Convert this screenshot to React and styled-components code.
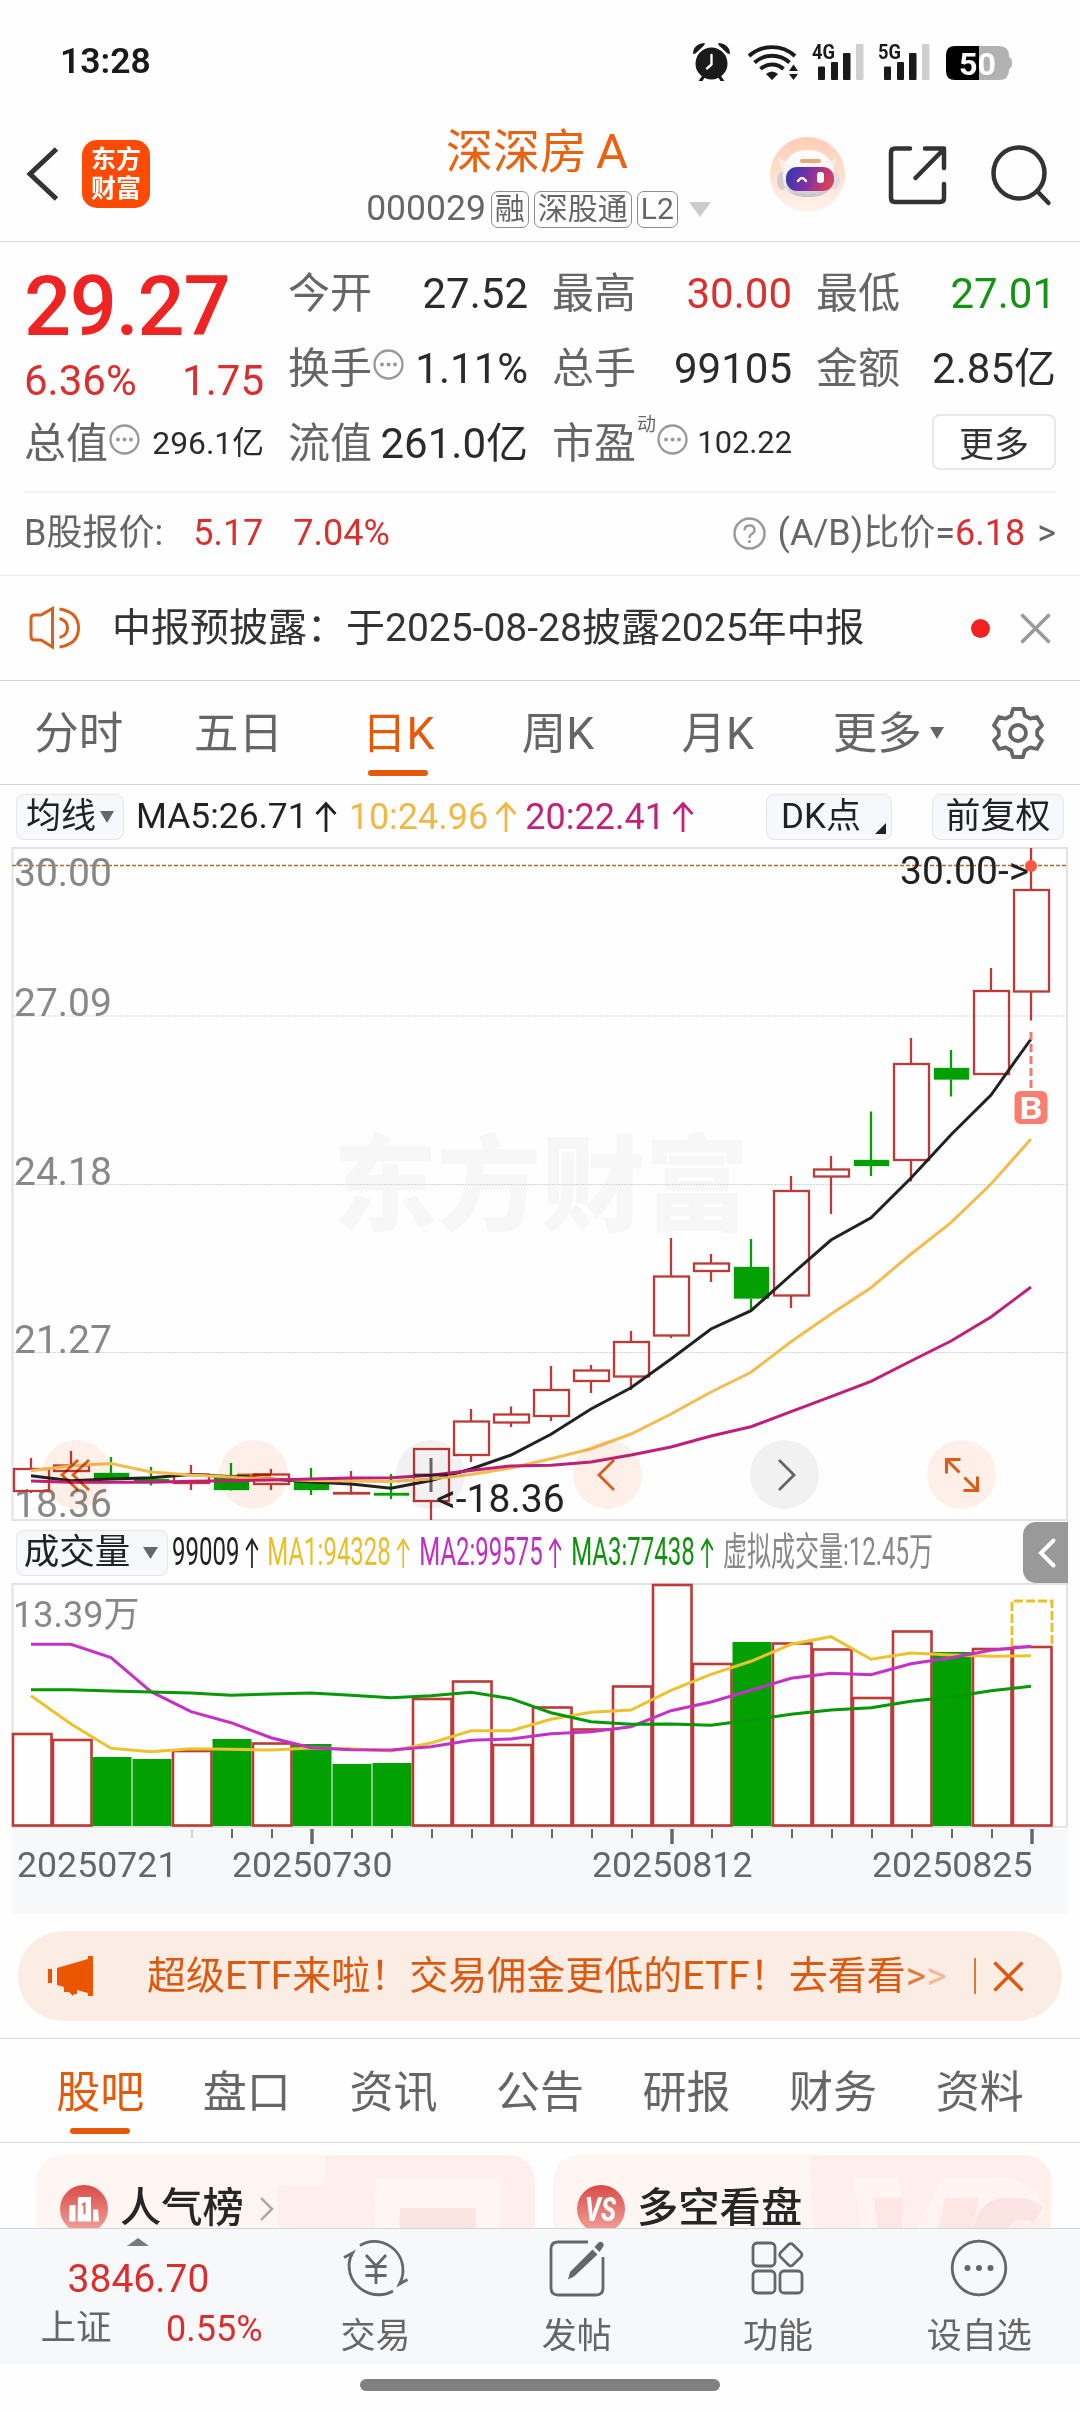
import React from 'react';
import styled, { createGlobalStyle, css } from 'styled-components';

const ORANGE = '#e5590b';
const RED = '#d92f2f';
const CANDLE_RED = '#bd3a37';
const GREEN = '#02a002';
const GRAY = '#666666';

const GlobalStyle = createGlobalStyle`
  * {
    box-sizing: border-box;
  }
  body {
    margin: 0;
    background: #ffffff;
    font-family: Roboto, 'Noto Sans CJK SC', sans-serif;
    line-height: 1;
    color: #222222;
  }
  svg {
    display: block;
    flex-shrink: 0;
    overflow: visible;
  }
`;

const Page = styled.div`
  width: 1080px;
  height: 2412px;
  display: flex;
  flex-direction: column;
  overflow: hidden;
  background: #fefefe;
`;

/* status bar */
const StatusBarWrap = styled.div`
  height: 104px;
  padding: 20px 68px 0 60px;
  display: flex;
  align-items: center;
  justify-content: space-between;
`;
const Clock = styled.span`
  font-size: 35.5px;
  font-weight: 600;
  color: #1a1a1a;
`;

/* header */
const HeaderWrap = styled.header`
  height: 138px;
  display: grid;
  grid-template-columns: 350px 376px 1fr;
  border-bottom: 1px solid #d4d4d4;
`;
const HeaderLeft = styled.div`
  display: flex;
  align-items: center;
  padding: 3px 0 0 25px;
  gap: 22px;
`;
const Logo = styled.div`
  width: 68px;
  height: 68px;
  border-radius: 15px;
  background: #fe4a02;
  color: #ffffff;
  font-size: 25px;
  font-weight: 700;
  line-height: 29px;
  text-align: center;
  padding-top: 5px;
`;
const HeaderCenter = styled.div`
  display: flex;
  flex-direction: column;
  align-items: center;
  padding-top: 20px;
  gap: 11px;
`;
const Title = styled.h1`
  margin: 0 2px 0 0;
  font-size: 47px;
  font-weight: 400;
  line-height: 56px;
  color: #e8620f;
  span {
    margin-left: 9px;
    font-size: 49px;
  }
`;
const CodeRow = styled.div`
  display: flex;
  align-items: center;
  height: 36px;
  gap: 5px;
  margin-left: 1px;
  font-size: 35.5px;
  color: ${GRAY};
`;
const Tag = styled.span`
  height: 37px;
  padding: 0 3px;
  border: 1.5px solid #8c8c8c;
  border-radius: 7px;
  font-size: 30px;
  line-height: 34px;
`;
const HeaderRight = styled.div`
  display: flex;
  align-items: center;
  justify-content: flex-end;
  padding: 4px 29px 0 0;
  gap: 43px;
`;

/* quote */
const QuoteWrap = styled.section`
  height: 249px;
  padding: 14px 24px 0;
  display: grid;
  grid-template-columns: repeat(4, 240px);
  column-gap: 24px;
`;
const QuoteCol = styled.div`
  display: flex;
  flex-direction: column;
`;
const Price = styled.div`
  height: 100px;
  line-height: 102px;
  font-size: 83px;
  font-weight: 500;
  letter-spacing: -1.300px;
  color: #ee2424;
`;
const Change = styled.div`
  height: 50px;
  display: flex;
  align-items: center;
  justify-content: space-between;
  font-size: 42px;
  color: ${RED};
`;
const Cell = styled.div`
  height: 75px;
  display: flex;
  align-items: center;
  white-space: nowrap;
`;
const CellLabel = styled.span`
  font-size: 42px;
  color: ${GRAY};
`;
const CellSup = styled.sup`
  align-self: flex-start;
  margin: 9px 0 0 1px;
  font-size: 19px;
  color: ${GRAY};
`;
const CellValue = styled.span`
  margin-left: auto;
  font-size: ${(p) => p.$size || 42}px;
  color: ${(p) => p.$color || '#2b2b2b'};
`;
const InfoIcon = styled.svg`
  margin: -8px 0 0 1px;
`;
const MoreButton = styled.button`
  width: 124px;
  height: 56px;
  margin: -4px 0 0 auto;
  padding: 0 0 2px;
  border: 2px solid #e8e8e8;
  border-radius: 8px;
  background: #ffffff;
  font: 35px Roboto, 'Noto Sans CJK SC', sans-serif;
  color: #333333;
`;
const Divider = styled.div`
  height: 2px;
  margin: 0 24px;
  background: #f3f3f3;
`;
const BShareRow = styled.div`
  height: 83px;
  padding: 0 24px 2px;
  display: flex;
  align-items: center;
  border-bottom: 1px solid #ececec;
  font-size: 36px;
  color: ${GRAY};
  b {
    font-weight: 400;
    color: ${RED};
    margin-left: 30px;
  }
`;
const Ratio = styled.div`
  margin-left: auto;
  display: flex;
  align-items: center;
  gap: 12px;
  b {
    margin: 0;
  }
`;

/* notice */
const NoticeRow = styled.div`
  height: 105px;
  padding: 0 29px;
  display: flex;
  align-items: center;
  border-bottom: 1px solid #d4d4d4;
`;
const NoticeText = styled.span`
  margin-left: 31px;
  font-size: 39px;
  color: #333333;
`;
const RedDot = styled.i`
  width: 19px;
  height: 19px;
  margin: 0 30px 0 auto;
  border-radius: 50%;
  background: #f02222;
`;

/* tabs */
const activeMark = css`
  &::after {
    content: '';
    position: absolute;
    left: 50%;
    bottom: 8px;
    width: 60px;
    height: 6px;
    margin-left: -30px;
    border-radius: 3px;
    background: ${ORANGE};
  }
`;
const Tab = styled.div`
  position: relative;
  flex: 0 0 ${(p) => p.$width}px;
  height: 100%;
  display: flex;
  align-items: center;
  justify-content: center;
  padding-top: 4px;
  color: ${(p) => (p.$active ? ORANGE : GRAY)};
  ${(p) => p.$active && activeMark}
`;
const PeriodTabs = styled.nav`
  height: 104px;
  margin-left: -1px;
  display: flex;
  align-items: center;
  border-bottom: 1px solid #d4d4d4;
  font-size: 44.5px;
`;
const TabCaret = styled.svg`
  margin: -4px -22px 0 8px;
`;
const GearWrap = styled.div`
  margin-left: 35px;
`;

/* indicator rows */
const MaRow = styled.div`
  height: 62px;
  padding: 1px 16px 0;
  display: flex;
  align-items: center;
`;
const Chip = styled.div`
  position: relative;
  width: ${(p) => p.$width}px;
  height: 46px;
  display: flex;
  align-items: center;
  justify-content: center;
  flex-shrink: 0;
  gap: ${(p) => p.$gap || 0}px;
  padding-right: ${(p) => p.$right || 0}px;
  border: 1.5px solid #e2e5eb;
  border-radius: 8px;
  background: #f6f8fb;
  font-size: ${(p) => p.$size || 35}px;
  color: #222222;
`;
const CornerMark = styled.i`
  position: absolute;
  right: 5px;
  bottom: 5px;
  border-left: 11px solid transparent;
  border-bottom: 11px solid #222222;
`;
const MaValue = styled.span`
  display: flex;
  align-items: center;
  margin-left: ${(p) => p.$left}px;
  gap: 7px;
  font-size: ${(p) => p.$size || 36}px;
  color: ${(p) => p.$color};
`;
const ChipGroup = styled.div`
  margin-left: auto;
  display: flex;
  gap: 40px;
`;
const VolRow = styled.div`
  height: 63px;
  padding: 0 12px 0 16px;
  display: flex;
  align-items: center;
`;
const VolValues = styled.div`
  width: 850px;
  margin-left: 4px;
  display: grid;
  grid-template-columns: 155px 247px 247px 247px 340px;
  transform: scaleX(0.615);
  transform-origin: left center;
  font-size: 39px;
  white-space: nowrap;
`;
const VolValue = styled.span`
  display: flex;
  align-items: center;
  gap: 9px;
  color: ${(p) => p.$color};
`;
const Collapse = styled.button`
  width: 45px;
  height: 61px;
  margin-left: auto;
  padding: 0 0 0 14px;
  border: 0;
  border-radius: 13px 0 0 13px;
  background: #999999;
`;

/* charts */
const ChartWrap = styled.div`
  position: relative;
  height: ${(p) => p.$height}px;
`;
const ChartTools = styled.div`
  position: absolute;
  left: 42px;
  bottom: 12px;
  display: flex;
  gap: 108px;
  mix-blend-mode: multiply;
`;
const ToolButton = styled.span`
  width: 69px;
  height: 69px;
  display: flex;
  align-items: center;
  justify-content: center;
  border-radius: 50%;
  background: ${(p) => (p.$gray ? '#f2f2f2' : '#fff1ea')};
  color: ${(p) => (p.$gray ? GRAY : '#dd5c17')};
`;
const AxisWrap = styled.div`
  height: 84px;
  margin: 0 12px;
  background: #f7f8fa;
`;

/* banner */
const Banner = styled.div`
  height: 90px;
  margin: 18px 18px 17px;
  padding: 0 38px 0 29px;
  display: flex;
  align-items: center;
  border-radius: 45px;
  background: #fcede4;
`;
const BannerText = styled.span`
  margin-left: 54px;
  font-size: 39px;
  white-space: nowrap;
  color: #dc5a10;
  i {
    font-style: normal;
    color: #e27a42;
  }
  i + i {
    color: #f2b799;
  }
`;
const BannerLine = styled.i`
  width: 2px;
  height: 36px;
  margin: 0 17px 0 auto;
  background: #e0773f;
`;

const InfoTabs = styled.nav`
  height: 105px;
  padding: 0 27px;
  display: flex;
  align-items: center;
  border-top: 1px solid #d4d4d4;
  border-bottom: 1px solid #d4d4d4;
  font-size: 44px;
`;

/* cards */
const CardsRow = styled.div`
  height: 85px;
  padding: 12px 29px 0 36px;
  display: grid;
  grid-template-columns: 499px 498px;
  column-gap: 18px;
  overflow: hidden;
`;
const Card = styled.div`
  position: relative;
  height: 130px;
  border-radius: 26px;
  overflow: hidden;
  background: #fff6f3;
`;
const CardArt = styled.svg`
  position: absolute;
  right: 0;
  top: 0;
`;
const CardHead = styled.div`
  position: relative;
  height: 108px;
  padding-left: 24px;
  display: flex;
  align-items: center;
  font-size: 41.3px;
  font-weight: 500;
  color: #262626;
  span {
    margin: 0 15px 0 12px;
  }
`;

/* bottom nav */
const BottomNav = styled.nav`
  height: 136px;
  display: grid;
  grid-template-columns: 275px repeat(4, 201.2px);
  border-top: 1px solid #d2d5d9;
  background: #f7f8fa;
`;
const IndexBox = styled.div`
  display: flex;
  flex-direction: column;
  align-items: center;
  padding-top: 9px;
`;
const IndexValue = styled.div`
  margin: 14px 0 0 2px;
  font-size: 39px;
  color: ${RED};
`;
const IndexRow = styled.div`
  width: 222px;
  margin: 12px 0 0 28px;
  display: flex;
  justify-content: space-between;
  font-size: 36px;
  color: ${RED};
  span {
    font-size: 35.5px;
    color: ${GRAY};
  }
`;
const NavItem = styled.div`
  display: flex;
  flex-direction: column;
  align-items: center;
  padding-top: 9px;
  gap: 21px;
  font-size: 35px;
  color: ${GRAY};
`;
const HomeArea = styled.div`
  height: 48px;
  display: flex;
  justify-content: center;
  padding-top: 15px;
`;
const HomeBar = styled.div`
  width: 360px;
  height: 12px;
  border-radius: 6px;
  background: #808080;
`;

const firstX = 31;
const step = 40;

// [high, top, bottom, low, falling]
const candles = [
  [1458, 1469, 1491, 1493],
  [1451, 1465.5, 1471, 1471],
  [1457, 1473, 1479, 1480, 1],
  [1467, 1479, 1481, 1485.5, 1],
  [1465, 1474.5, 1483, 1490],
  [1463, 1475, 1490, 1490.5, 1],
  [1469, 1474.5, 1484, 1490],
  [1468, 1479, 1490, 1495, 1],
  [1471, 1493, 1493, 1494.5],
  [1474, 1493, 1495, 1499, 1],
  [1449, 1449, 1501, 1520],
  [1409, 1421.5, 1455, 1462],
  [1406.5, 1414.5, 1422.5, 1427],
  [1366, 1390, 1416, 1421],
  [1365, 1370.5, 1381, 1393],
  [1331, 1342, 1376.5, 1390],
  [1238, 1276.5, 1335.5, 1338],
  [1254, 1263.5, 1271, 1282],
  [1239, 1267, 1298.5, 1309, 1],
  [1176, 1191, 1295.5, 1308],
  [1156, 1169.5, 1176.5, 1214],
  [1111.5, 1160, 1166, 1176, 1],
  [1038, 1064, 1160, 1181.5],
  [1050, 1068, 1079.5, 1096.5, 1],
  [968, 991, 1074, 1074],
  [848, 890, 991.5, 1020.5],
];

const ma5 = [
  1475.7, 1480.7, 1479, 1477.7, 1474.5, 1476.7, 1479, 1482, 1484, 1488.3, 1480.5, 1469, 1455,
  1434.3, 1409, 1387.7, 1359, 1329, 1310.7, 1275, 1240, 1217.7, 1178, 1134.7, 1095, 1039,
];
const ma10 = [
  1470.7, 1465.7, 1463.5, 1472, 1475, 1477, 1479, 1480.5, 1481, 1481.5, 1479, 1474.6, 1468,
  1458.7, 1448.7, 1434, 1414, 1392, 1372.3, 1341.7, 1314, 1287.7, 1254, 1222.7, 1184, 1139,
];
const ma20 = [
  1481, 1482.3, 1482.3, 1482.3, 1481.3, 1480.7, 1480, 1479, 1478, 1477.7, 1475.3, 1470.6, 1466,
  1465.3, 1462, 1455, 1447, 1436, 1426.7, 1411.7, 1396.7, 1381.3, 1361, 1341, 1317, 1287,
];

// [top, falling]
const volumes = [
  [1734], [1740], [1758, 1], [1760, 1], [1751], [1740, 1], [1743.5], [1745, 1], [1765, 1],
  [1764, 1], [1699], [1681.5], [1745], [1707.5], [1729.5], [1686.5], [1585], [1664], [1643, 1],
  [1643.5], [1649.5], [1698], [1631.5], [1653, 1], [1649], [1647],
];
const volMa1 = [
  1695.7, 1724, 1748.3, 1751.7, 1748.7, 1749.3, 1750, 1748, 1748.7, 1751, 1743, 1730.7, 1730.7,
  1719.3, 1712.3, 1710, 1690.3, 1674.3, 1661.3, 1644.3, 1636.7, 1659.3, 1653, 1655, 1656.3, 1655.7,
];
const volMa2 = [
  1644.3, 1644.3, 1657.7, 1691.7, 1711.7, 1722.7, 1737.7, 1747.7, 1749.7, 1750, 1746.7, 1740.3,
  1739, 1733.7, 1731.7, 1726.7, 1710.7, 1702, 1690.3, 1678.3, 1673.3, 1674.7, 1663.7, 1657.7,
  1650.3, 1646.3,
];
const volMa3 = [
  1689.7, 1689.7, 1691, 1692, 1693, 1695.3, 1694, 1693, 1695.3, 1697.7, 1695.7, 1692.3, 1698.7,
  1712.7, 1721.7, 1724.3, 1724, 1725.3, 1720, 1714.3, 1710, 1707.7, 1701.3, 1697, 1690.7, 1686.3,
];

const toPoints = (list) => list.map((y, i) => `${firstX + i * step},${y}`).join(' ');

function Line({ data, color }) {
  return <polyline points={toPoints(data)} fill="none" stroke={color} strokeWidth="3" />;
}

function Caret({ color = GRAY, w = 14, h = 12 }) {
  return (
    <svg width={w} height={h} viewBox="0 0 14 12" preserveAspectRatio="none">
      <path d="M0 0h14l-7 12z" fill={color} />
    </svg>
  );
}

function UpArrow() {
  return (
    <svg width="22" height="30" viewBox="0 0 22 30">
      <path d="M11 30V2M1.500 12L11 1.500 20.500 12" fill="none" stroke="currentColor" strokeWidth="2.800" />
    </svg>
  );
}

function MoreInfo() {
  return (
    <InfoIcon width="31" height="31" viewBox="0 0 31 31">
      <circle cx="15.500" cy="15.500" r="14" fill="none" stroke="#999" strokeWidth="2.300" />
      <circle cx="9" cy="15.500" r="2" fill="#999" />
      <circle cx="15.500" cy="15.500" r="2" fill="#999" />
      <circle cx="22" cy="15.500" r="2" fill="#999" />
    </InfoIcon>
  );
}

function Cross({ color, size = 31 }) {
  return (
    <svg width={size} height={size} viewBox="0 0 31 31">
      <path d="M1.500 1.500l28 28M29.500 1.500l-28 28" stroke={color} strokeWidth="3.400" />
    </svg>
  );
}

function StatusBar() {
  return (
    <StatusBarWrap>
      <Clock>13:28</Clock>
      <svg width="320" height="60" viewBox="692 32 320 60">
        <g fill="#1a1a1a">
          <circle cx="711.5" cy="63.5" r="16" />
          <path d="M693 54c0-7 5-11 12-11l-1 2.500-8.500 8zM730 54c0-7-5-11-12-11l1 2.500 8.500 8z" />
          <path d="M702 76l-3.500 5h4l2.500-4zM721 76l3.500 5h-4l-2.500-4z" />
          <path d="M711.500 55v9.500l-4.500 4" fill="none" stroke="#fff" strokeWidth="2.400" strokeLinecap="round" />
        </g>
        <g fill="none" stroke="#1a1a1a" strokeWidth="3.800">
          <path d="M749 56a34 34 0 0 1 46 0" />
          <path d="M754.500 62.500a26 26 0 0 1 35 0" />
          <path d="M760.500 69a17 17 0 0 1 23 0" />
        </g>
        <path d="M766 74q6-5 12 0l-6 6zM789 71l4.500-6.500 4.500 6.500zM789 74l4.500 6 4.500-6z" fill="#1a1a1a" />
        {[812, 878].map((x, i) => (
          <g key={x} fill="#1a1a1a">
            <text x={x} y="59" fontSize="21" fontWeight="700" textLength="23" lengthAdjust="spacingAndGlyphs">
              {i ? '5G' : '4G'}
            </text>
            <rect x={x + 6} y="66.500" width="7" height="13.500" rx="1" />
            <rect x={x + 19} y="62" width="7" height="18" rx="1" />
            <rect x={x + 31} y="53" width="7.500" height="27" rx="1" />
            <rect x={x + 44} y="44" width="7.500" height="36" rx="1" fill="#cfcfcf" />
          </g>
        ))}
        <path d="M955 46h44q10 0 10 10v1q3 1 3 6t-3 6v1q0 10-10 10h-44z" fill="#b2b2b2" />
        <path d="M979 46v34h-24q-9 0-9-9V55q0-9 9-9z" fill="#000" />
        <text x="977.500" y="75" fontSize="31" fontWeight="700" fill="#fff" textAnchor="middle" textLength="37" lengthAdjust="spacingAndGlyphs">
          50
        </text>
      </svg>
    </StatusBarWrap>
  );
}

function Robot() {
  return (
    <svg width="75" height="75" viewBox="0 0 75 75">
      <defs>
        <linearGradient id="robotBg" x1="0" y1="0" x2="0" y2="1">
          <stop offset="0" stopColor="#ffcdb4" />
          <stop offset="1" stopColor="#fff3ec" />
        </linearGradient>
        <linearGradient id="robotFace" x1="0" y1="0" x2="1" y2="0.200">
          <stop offset="0" stopColor="#2b3cae" />
          <stop offset="0.500" stopColor="#7a2fa6" />
          <stop offset="1" stopColor="#d8405c" />
        </linearGradient>
        <linearGradient id="robotHead" x1="0" y1="0" x2="0" y2="1">
          <stop offset="0" stopColor="#ffffff" />
          <stop offset="0.700" stopColor="#efecee" />
          <stop offset="1" stopColor="#c3bfc5" />
        </linearGradient>
      </defs>
      <circle cx="37.500" cy="37.500" r="37.500" fill="url(#robotBg)" />
      <path d="M8 17q1 6 7 7l3 6-4 4q-6-7-6-17zM66 17q0 6-6 7l-3 6 4 4q6-7 5-17z" fill="#f6ecea" />
      <ellipse cx="12" cy="44" rx="5" ry="9" fill="#d3cdd2" />
      <ellipse cx="65" cy="44" rx="5" ry="9" fill="#e3dcdf" />
      <path d="M38 13c17 0 26 11 26 26 0 14-8 21-26 21s-25-7-25-21c0-15 8-26 25-26z" fill="url(#robotHead)" />
      <rect x="30" y="22" width="21" height="4" rx="2" fill="#e9a878" />
      <rect x="16" y="30" width="48" height="24" rx="11" fill="url(#robotFace)" />
      <path d="M28 44q4-6 8 0" fill="none" stroke="#fff" strokeWidth="2.500" strokeLinecap="round" />
      <rect x="47" y="35" width="7" height="11" rx="3" fill="#fff" />
    </svg>
  );
}

function Header() {
  return (
    <HeaderWrap>
      <HeaderLeft>
        <svg width="35" height="56" viewBox="0 0 35 56">
          <path d="M31.500 3L5 28l26.500 25" fill="none" stroke="#333" strokeWidth="5" />
        </svg>
        <Logo>
          东方
          <br />
          财富
        </Logo>
      </HeaderLeft>
      <HeaderCenter>
        <Title>
          深深房<span>A</span>
        </Title>
        <CodeRow>
          000029
          <Tag>融</Tag>
          <Tag>深股通</Tag>
          <Tag>L2</Tag>
          <svg width="28" height="15" viewBox="-6 0 28 15">
            <path d="M0 0h22L11 15z" fill="#cccccc" />
          </svg>
        </CodeRow>
      </HeaderCenter>
      <HeaderRight>
        <Robot />
        <svg width="58" height="58" viewBox="0 0 58 58">
          <g fill="none" stroke="#333" strokeWidth="4.500" strokeLinecap="round" strokeLinejoin="round">
            <path d="M22 2.500H7q-4 0-4 4V52q0 4 4 4h45q4 0 4-4V38" />
            <path d="M37 2.500h19V22M56 3L27.500 32" />
          </g>
        </svg>
        <svg width="62" height="60" viewBox="0 0 62 60">
          <circle cx="30" cy="28" r="25.500" fill="none" stroke="#333" strokeWidth="4.500" />
          <path d="M48 46l11.500 12" stroke="#333" strokeWidth="4.500" strokeLinecap="round" />
        </svg>
      </HeaderRight>
    </HeaderWrap>
  );
}

function Quote() {
  return (
    <>
      <QuoteWrap>
        <QuoteCol>
          <Price>29.27</Price>
          <Change>
            <span>6.36%</span>
            <span>1.75</span>
          </Change>
          <Cell>
            <CellLabel>总值</CellLabel>
            <MoreInfo />
            <CellValue $size={31.8}>296.1亿</CellValue>
          </Cell>
        </QuoteCol>
        <QuoteCol>
          <Cell>
            <CellLabel>今开</CellLabel>
            <CellValue>27.52</CellValue>
          </Cell>
          <Cell>
            <CellLabel>换手</CellLabel>
            <MoreInfo />
            <CellValue>1.11%</CellValue>
          </Cell>
          <Cell>
            <CellLabel>流值</CellLabel>
            <CellValue>261.0亿</CellValue>
          </Cell>
        </QuoteCol>
        <QuoteCol>
          <Cell>
            <CellLabel>最高</CellLabel>
            <CellValue $color={RED}>30.00</CellValue>
          </Cell>
          <Cell>
            <CellLabel>总手</CellLabel>
            <CellValue>99105</CellValue>
          </Cell>
          <Cell>
            <CellLabel>市盈</CellLabel>
            <CellSup>动</CellSup>
            <MoreInfo />
            <CellValue $size={30.8}>102.22</CellValue>
          </Cell>
        </QuoteCol>
        <QuoteCol>
          <Cell>
            <CellLabel>最低</CellLabel>
            <CellValue $color="#149414">27.01</CellValue>
          </Cell>
          <Cell>
            <CellLabel>金额</CellLabel>
            <CellValue>2.85亿</CellValue>
          </Cell>
          <Cell>
            <MoreButton>更多</MoreButton>
          </Cell>
        </QuoteCol>
      </QuoteWrap>
      <Divider />
      <BShareRow>
        B股报价:<b>5.17</b>
        <b>7.04%</b>
        <Ratio>
          <svg width="33" height="33" viewBox="0 0 33 33">
            <circle cx="16.500" cy="16.500" r="15" fill="none" stroke="#999" strokeWidth="2.500" />
            <path d="M11.500 13.500q0-5 5-5t5 4.500q0 3-3.500 4.500-1.500.800-1.500 3.500" fill="none" stroke="#999" strokeWidth="2.300" />
            <circle cx="16.500" cy="24.500" r="1.600" fill="#999" />
          </svg>
          <span>
            (A/B)比价=<b>6.18</b>
          </span>
          <span>&gt;</span>
        </Ratio>
      </BShareRow>
    </>
  );
}

function Notice() {
  return (
    <NoticeRow>
      <svg width="52" height="44" viewBox="0 0 52 44">
        <g fill="none" stroke="#d9611c" strokeWidth="3">
          <path d="M23.500 2.500L12 9H5.500Q2 9 2 12.500v18Q2 34 5.500 34H12l11.500 7z" />
          <path d="M30.500 12.500q8 2 8 9.500t-8 9.500M30.500 3q19 3 19 19t-19 19" />
        </g>
      </svg>
      <NoticeText>中报预披露：于2025-08-28披露2025年中报</NoticeText>
      <RedDot />
      <Cross color="#999" />
    </NoticeRow>
  );
}

function Periods() {
  return (
    <PeriodTabs>
      {['分时', '五日', '日K', '周K', '月K', '更多'].map((name) => (
        <Tab key={name} $width={159.7} $active={name === '日K'}>
          {name}
          {name === '更多' && (
            <TabCaret width="14" height="12" viewBox="0 0 14 12">
              <path d="M0 0h14l-7 12z" fill={GRAY} />
            </TabCaret>
          )}
        </Tab>
      ))}
      <GearWrap>
        <svg width="52" height="52" viewBox="0 0 52 52">
          <g fill="none" stroke={GRAY} strokeWidth="3.800" strokeLinejoin="round">
            <path d="M21 2h10l1.800 6.500 5.500 3.200 6.700-1.700 5 8.500-4.800 5v5l4.800 5-5 8.500-6.700-1.700-5.500 3.200L31 50H21l-1.800-6.500-5.500-3.200L7 42l-5-8.500 4.800-5v-5L2 18.500 7 10l6.700 1.700 5.500-3.200z" />
            <circle cx="26" cy="26" r="8" />
          </g>
        </svg>
      </GearWrap>
    </PeriodTabs>
  );
}

function PriceChart() {
  return (
    <ChartWrap $height={674}>
      <svg width="1080" height="674" viewBox="0 847 1080 674">
        <text x="333" y="1223" fontSize="104" fontWeight="900" fill="#f7f7f7">
          东方财富
        </text>
        <rect x="12.500" y="848" width="1054.500" height="672" fill="none" stroke="#e2e2e2" strokeWidth="2" />
        {[1016, 1184.5, 1352.5].map((y) => (
          <path key={y} d={`M12 ${y}H1067`} stroke="#d6d6d6" strokeWidth="1" strokeDasharray="2 1" />
        ))}
        <path d="M12 865.500H1067" stroke="#b5692f" strokeWidth="1.300" strokeDasharray="4 2" />
        <g fontSize="39" fill="#888888">
          <text x="14" y="886">30.00</text>
          <text x="14" y="1016">27.09</text>
          <text x="14" y="1185">24.18</text>
          <text x="14" y="1353">21.27</text>
          <text x="14" y="1517">18.36</text>
        </g>
        {candles.map(([high, top, bottom, low, falling], i) => {
          const x = firstX + i * step;
          const color = falling ? GREEN : CANDLE_RED;
          return (
            <g key={x} stroke={color} strokeWidth="2.300">
              <path d={`M${x} ${high}V${top}M${x} ${bottom}V${low}`} />
              <rect
                x={falling ? x - 16 : x - 17}
                y={falling ? top + 1 : top}
                width={falling ? 33 : 35}
                height={Math.max(falling ? bottom - top - 2 : bottom - top, 0.5)}
                fill={falling ? color : 'none'}
              />
            </g>
          );
        })}
        <Line data={ma5} color="#222222" />
        <Line data={ma10} color="#f3bc4f" />
        <Line data={ma20} color="#bf1f7b" />
        <path d="M1031 1032V1090" stroke="#f07a6c" strokeWidth="3" strokeDasharray="8 4" />
        <rect x="1014.500" y="1091" width="33" height="33" rx="6" fill="#f97e6f" />
        <text x="1031" y="1118.500" fontSize="31" fontWeight="700" fill="#fff" textAnchor="middle" textLength="23" lengthAdjust="spacingAndGlyphs">
          B
        </text>
        <g fontSize="39" fill="#222222">
          <text x="900" y="884">30.00-&gt;</text>
          <text x="436" y="1512">&lt;-18.36</text>
        </g>
        <circle cx="1031" cy="866" r="6" fill="#fb5743" />
      </svg>
      <ChartTools>
        <ToolButton>
          <svg width="34" height="34" viewBox="0 0 34 34">
            <path d="M18 2L2 17l16 15M29 2L13 17l16 15" fill="none" stroke="currentColor" strokeWidth="2.800" />
          </svg>
        </ToolButton>
        <ToolButton>
          <svg width="34" height="34" viewBox="0 0 34 34">
            <path d="M0 17h34" stroke="currentColor" strokeWidth="3" />
          </svg>
        </ToolButton>
        <ToolButton $gray>
          <svg width="34" height="34" viewBox="0 0 34 34">
            <path d="M0 17h34M17 0v34" stroke="currentColor" strokeWidth="3" />
          </svg>
        </ToolButton>
        <ToolButton>
          <svg width="34" height="34" viewBox="0 0 34 34">
            <path d="M23 2L8 17l15 15" fill="none" stroke="currentColor" strokeWidth="2.800" />
          </svg>
        </ToolButton>
        <ToolButton $gray>
          <svg width="34" height="34" viewBox="0 0 34 34">
            <path d="M11 2l15 15-15 15" fill="none" stroke="currentColor" strokeWidth="2.800" />
          </svg>
        </ToolButton>
        <ToolButton>
          <svg width="34" height="34" viewBox="0 0 34 34">
            <g fill="none" stroke="currentColor" strokeWidth="3">
              <path d="M15.500 1.500h-14v14M2 2l12.500 12.500" />
              <path d="M18.500 32.500h14v-14M32 32L19.500 19.500" />
            </g>
          </svg>
        </ToolButton>
      </ChartTools>
    </ChartWrap>
  );
}

function VolumeChart() {
  return (
    <ChartWrap $height={245}>
      <svg width="1080" height="245" viewBox="0 1584 1080 245">
        <rect x="12.500" y="1584" width="1054.500" height="243" fill="none" stroke="#e2e2e2" strokeWidth="2" />
        <text x="13" y="1627" fontSize="36" fill="#888888">
          13.39万
        </text>
        {volumes.map(([top, falling], i) => {
          const x = 12 + i * step;
          return falling ? (
            <rect key={x} x={x + 0.5} y={top - 1} width="39" height={1827 - top} fill={GREEN} />
          ) : (
            <rect key={x} x={x + 1} y={top} width="38.500" height={1825.5 - top} fill="none" stroke={CANDLE_RED} strokeWidth="2.600" />
          );
        })}
        <path d="M1012 1647V1601H1052V1647" fill="none" stroke="#e9c12f" strokeWidth="3" strokeDasharray="9 3" />
        <Line data={volMa1} color="#ecc22e" />
        <Line data={volMa2} color="#c431c6" />
        <Line data={volMa3} color="#069806" />
      </svg>
    </ChartWrap>
  );
}

function DateAxis() {
  const bold = [312, 672, 1032];
  const ticks = [];
  for (let x = 192; x <= 1032; x += step) ticks.push(x);
  return (
    <AxisWrap>
      <svg width="1056" height="84" viewBox="12 1829 1056 84">
        {ticks.map((x) => (
          <path
            key={x}
            d={`M${x} 1829V${bold.includes(x) ? 1844 : 1838}`}
            stroke={x === 192 ? '#d5d5d5' : GRAY}
            strokeWidth={bold.includes(x) ? 3.5 : 2}
          />
        ))}
        <g fontSize="35.700" fill={GRAY}>
          <text x="17" y="1877">20250721</text>
          <text x="232" y="1877">20250730</text>
          <text x="592" y="1877">20250812</text>
          <text x="872" y="1877">20250825</text>
        </g>
      </svg>
    </AxisWrap>
  );
}

function EtfBanner() {
  return (
    <Banner>
      <svg width="46" height="40" viewBox="0 0 46 40">
        <path d="M1 13h4v14H1zM10 12L41 3V0h5v40h-5v-3l-11-3v4h-3l-1 2-4-4h-5v-5l-7-2z" fill="#ec5500" />
      </svg>
      <BannerText>
        超级ETF来啦！交易佣金更低的ETF！去看看<i>&gt;</i>
        <i>&gt;</i>
      </BannerText>
      <BannerLine />
      <Cross color="#dc5a10" />
    </Banner>
  );
}

function Cards() {
  return (
    <CardsRow>
      <Card>
        <CardArt width="260" height="130" viewBox="0 0 260 130">
          <path d="M51 0H260V130H3V31H50z" fill="#feefec" />
          <path d="M101 24H225V130H98z" fill="#fff5f3" />
          <path d="M125 53H201V130H123z" fill="#fce4e2" />
        </CardArt>
        <CardHead>
          <svg width="48" height="48" viewBox="0 0 48 48">
            <defs>
              <linearGradient id="badge" x1="0" y1="0" x2="0" y2="1">
                <stop offset="0" stopColor="#da4b47" />
                <stop offset="1" stopColor="#f2a49c" />
              </linearGradient>
            </defs>
            <circle cx="24" cy="24" r="24" fill="url(#badge)" />
            <path d="M9.500 20h6v16.500H9zM18 12h13v24.500H17.500zM33 24.500h5l1 12h-6z" fill="#fff" />
            <path d="M22 20l2.500-1.500V29" fill="none" stroke="#e26a64" strokeWidth="2" />
          </svg>
          <span>人气榜</span>
          <svg width="15" height="24" viewBox="0 0 15 24">
            <path d="M2 1l11 11L2 23" fill="none" stroke="#b0aaa9" strokeWidth="2.600" />
          </svg>
        </CardHead>
      </Card>
      <Card>
        <CardArt width="244" height="130" viewBox="0 0 244 130">
          <path d="M2 0H244V130H10z" fill="#feefec" />
          <path d="M47 22H92l8 70 36-70H186q44 0 53 36l-20 12q-20-16-36 10v50H60z" fill="#fff4f2" />
          <path d="M67 43H96l-3 87H76zM138 43H172l-20 87H118z" fill="#fde6e4" />
          <path d="M166 130q-12-87 34-87 30 0 36 10l-10 15q-34-18-34 62z" fill="#fce4e2" />
        </CardArt>
        <CardHead>
          <svg width="48" height="48" viewBox="0 0 48 48">
            <circle cx="24" cy="24" r="24" fill="url(#badge)" />
            <text x="23.500" y="36" fontSize="33" fontWeight="800" fontStyle="italic" fill="#fff" textAnchor="middle" textLength="31" lengthAdjust="spacingAndGlyphs">
              VS
            </text>
          </svg>
          <span>多空看盘</span>
        </CardHead>
      </Card>
    </CardsRow>
  );
}

function Bottom() {
  return (
    <BottomNav>
      <IndexBox>
        <svg width="22" height="8" viewBox="0 0 22 8">
          <path d="M0 8L11 0l11 8z" fill="#77797d" />
        </svg>
        <IndexValue>3846.70</IndexValue>
        <IndexRow>
          <span>上证</span>0.55%
        </IndexRow>
      </IndexBox>
      <NavItem>
        <svg width="66" height="60" viewBox="0 0 66 60">
          <g fill="none" stroke={GRAY} strokeWidth="2.800">
            <path d="M17 7.500C35-3.500 60 9 60 33q0 6-3.500 13l8-4.500" />
            <path d="M50 53C32 63.500 6 51 6 27q0-6 3.500-12L1 19.500" />
            <path d="M23 17l10 11 10-11M33 28v18M22.500 28.500h21M22.500 37.500h21" />
          </g>
        </svg>
        交易
      </NavItem>
      <NavItem>
        <svg width="56" height="60" viewBox="0 0 56 60">
          <path d="M39 4H9Q2 4 2 11v39q0 7 7 7h38q7 0 7-7V19" fill="none" stroke={GRAY} strokeWidth="2.800" />
          <path d="M43.500 11.500l5 5L25 38.500l-6 3 2-7.500zM45.500 9l4-4.500q2-1.500 4 0 2 2.500.500 4.500L50.500 14z" fill={GRAY} />
        </svg>
        发帖
      </NavItem>
      <NavItem>
        <svg width="54" height="60" viewBox="0 0 54 60">
          <g fill="none" stroke={GRAY} strokeWidth="2.800">
            <rect x="2" y="5" width="22" height="23" rx="4" />
            <rect x="2" y="33" width="22" height="22" rx="4" />
            <rect x="29" y="33" width="22" height="22" rx="4" />
            <rect x="31" y="8" width="17.500" height="17.500" rx="3" transform="rotate(45 39.750 16.750)" />
          </g>
        </svg>
        功能
      </NavItem>
      <NavItem>
        <svg width="58" height="60" viewBox="0 0 58 60">
          <circle cx="29" cy="30" r="26.800" fill="none" stroke={GRAY} strokeWidth="2.800" />
          <circle cx="17.500" cy="30" r="3" fill={GRAY} />
          <circle cx="29" cy="30" r="3" fill={GRAY} />
          <circle cx="40.500" cy="30" r="3" fill={GRAY} />
        </svg>
        设自选
      </NavItem>
    </BottomNav>
  );
}

function App() {
  return (
    <Page>
      <GlobalStyle />
      <StatusBar />
      <Header />
      <Quote />
      <Notice />
      <Periods />
      <MaRow>
        <Chip $width={108} $gap={4}>
          均线
          <Caret />
        </Chip>
        <MaValue $left={12} $color="#222222" $size={35.4}>
          MA5:26.71
          <UpArrow />
        </MaValue>
        <MaValue $left={12} $color="#efb945">
          10:24.96
          <UpArrow />
        </MaValue>
        <MaValue $left={8} $color="#c0217b">
          20:22.41
          <UpArrow />
        </MaValue>
        <ChipGroup>
          <Chip $width={126} $right={16}>
            DK点
            <CornerMark />
          </Chip>
          <Chip $width={132}>前复权</Chip>
        </ChipGroup>
      </MaRow>
      <PriceChart />
      <VolRow>
        <Chip $width={152} $gap={13} $size={35.6} $right={2}>
          成交量
          <Caret w={15} />
        </Chip>
        <VolValues>
          <VolValue $color="#222222">
            99009
            <UpArrow />
          </VolValue>
          <VolValue $color="#e9c02c">
            MA1:94328
            <UpArrow />
          </VolValue>
          <VolValue $color="#c02fc3">
            MA2:99575
            <UpArrow />
          </VolValue>
          <VolValue $color="#109210">
            MA3:77438
            <UpArrow />
          </VolValue>
          <VolValue $color="#888888">虚拟成交量:12.45万</VolValue>
        </VolValues>
        <Collapse>
          <svg width="20" height="30" viewBox="0 0 20 30">
            <path d="M16.500 2.500L4 15l12.500 12.500" fill="none" stroke="#fff" strokeWidth="4" strokeLinecap="round" />
          </svg>
        </Collapse>
      </VolRow>
      <VolumeChart />
      <DateAxis />
      <EtfBanner />
      <InfoTabs>
        {['股吧', '盘口', '资讯', '公告', '研报', '财务', '资料'].map((name) => (
          <Tab key={name} $width={146.57} $active={name === '股吧'}>
            {name}
          </Tab>
        ))}
      </InfoTabs>
      <Cards />
      <Bottom />
      <HomeArea>
        <HomeBar />
      </HomeArea>
    </Page>
  );
}

export default App;
